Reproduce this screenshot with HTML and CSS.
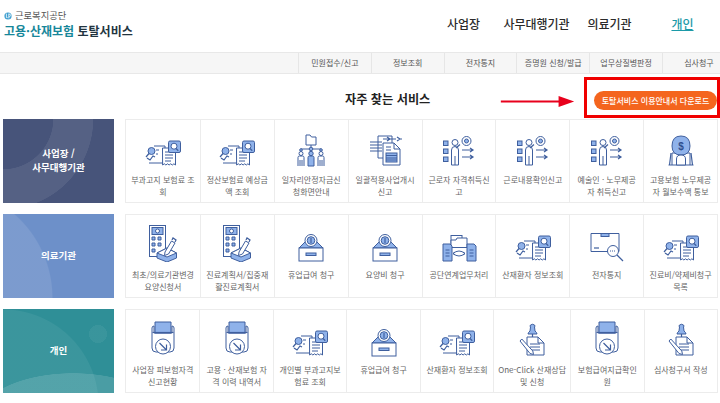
FILE: index.html
```html
<!DOCTYPE html>
<html lang="ko">
<head>
<meta charset="utf-8">
<title>고용·산재보험 토탈서비스</title>
<link rel="stylesheet" href="styles.css">
</head>
<body>
<svg class="sprite" aria-hidden="true">
  <defs>
    <symbol id="i-search" viewBox="0 0 44 38">
      <path class="line" fill="#fff" d="M13 17h11v17H8"/>
      <path class="line" fill="none" d="M15 21h3M15 25h2"/>
      <circle class="fill" cx="10.500" cy="22" r="3.500"/>
      <path class="thick" d="M8 24.500l-3 3.500M6 29l3 2 3-4 2 1"/>
      <path class="line" fill="#fff" d="M21.500 19h13v17l-1.600-1.200-1.600 1.200-1.600-1.200-1.600 1.200-1.600-1.200-1.600 1.200-1.600-1.200-1.700 1.200z"/>
      <path class="line" fill="none" d="M24 23h8M24 26h8M24 29h8M24 32h6"/>
      <rect class="fill" x="27.500" y="12" width="12" height="11.500" rx="1.500"/>
      <circle class="line" fill="#fff" cx="33" cy="17.200" r="3"/>
      <path class="thick" d="M35 19.500l2.300 2.200"/>
    </symbol>
    <symbol id="i-org" viewBox="0 0 44 38">
      <path class="fill-w" d="M17 6h4l1.500 2H27v8H17z"/>
      <path class="line" fill="none" d="M22 16v5M12 20h20M12 20v3M32 20v3M22 20v4"/>
      <circle class="fill" cx="12" cy="21" r="1.300"/>
      <circle class="fill" cx="32" cy="21" r="1.300"/>
      <circle class="fill" cx="22" cy="20" r="1.800"/>
      <circle class="fill-w" cx="12" cy="24.500" r="2"/>
      <circle class="fill-w" cx="32" cy="24.500" r="2"/>
      <path class="fill-w" d="M9 37v-8.500q0-1.500 1.500-1.500h3q1.500 0 1.500 1.500V37M29 37v-8.500q0-1.500 1.500-1.500h3q1.500 0 1.500 1.500V37"/>
      <path class="line" fill="none" d="M11 31v6M13 31v6M31 31v6M33 31v6"/>
      <circle class="fill" cx="22" cy="24.500" r="2.200"/>
      <path class="fill" d="M19 37v-8.500q0-1.500 1.500-1.500h3q1.500 0 1.500 1.500V37z"/>
    </symbol>
    <symbol id="i-docs" viewBox="0 0 44 38">
      <path class="line" fill="#fff" d="M15 7h14v22H15z"/>
      <path class="thick" d="M7 13h12M7 16h12M7 19h12M7 22h12"/>
      <path class="thick" d="M20 10h13M36 10h3M34 8l3 2-3 2M24 8l3 2-3 2"/>
      <path class="line" fill="#fff" d="M20 14h11l6 6v16H20z"/>
      <path class="line" fill="none" d="M31 14v6h6"/>
      <path class="thick" d="M23 18h5M23 21h5"/>
      <rect class="fill" x="23" y="24" width="11" height="9"/>
      <path class="line" fill="none" d="M23 26.500h11M23 29h11M23 31h11"/>
    </symbol>
    <symbol id="i-person" viewBox="0 0 44 38">
      <rect class="fill" x="6.500" y="12" width="4.500" height="4.500"/>
      <rect class="fill" x="6.500" y="20" width="4.500" height="4.500"/>
      <rect class="fill" x="6.500" y="28" width="4.500" height="4.500"/>
      <circle class="fill-w" cx="18" cy="13.500" r="3"/>
      <path class="fill-w" d="M14.500 36V21q0-3.500 3.500-3.500t3.500 3.500v15zM18 27v9"/>
      <path class="thick" d="M19 19l4-3.500"/>
      <circle class="fill-w" cx="29.500" cy="12" r="4.500"/>
      <circle class="fill" cx="29.500" cy="12" r="2"/>
      <path class="thick" d="M25 21h10M33 19l3 2-3 2M25 28h10M33 26l3 2-3 2"/>
    </symbol>
    <symbol id="i-money" viewBox="0 0 44 38">
      <path class="line" fill="#fff" d="M13 36V24h18v12"/>
      <path class="thick" d="M9.500 36h25M12 24l-1.500 12M32 24l1.500 12"/>
      <path class="fill" d="M22 7q9 0 9 10 0 9-9 9t-9-9q0-10 9-10z"/>
      <path class="line" fill="#fff" d="M17.500 36v-6q0-4 4.500-4t4.500 4v6z"/>
      <text class="dollar" x="22" y="20.500" text-anchor="middle">$</text>
    </symbol>
    <symbol id="i-build" viewBox="0 0 44 38">
      <rect class="fill-w" x="8.500" y="1.500" width="16" height="31"/>
      <rect class="fill" x="11" y="3.500" width="11" height="7"/>
      <circle class="line" fill="#fff" cx="16.500" cy="7" r="2"/>
      <path class="fill" d="M11 13h3v3h-3zM17 13h3v3h-3zM11 19h3v3h-3zM17 19h3v3h-3zM11 25h3v3h-3z"/>
      <path class="fill" d="M16 29l10-5 9.500 5v5l-9.500 4-10-4z"/>
      <path class="line" fill="#fff" d="M16 29l10-5 9.500 5-9.500 4z"/>
      <path class="fill-w" d="M24 28l6.500-11 3.500 2-6.500 11-4 1.500z"/>
      <path class="thick" d="M31 16l1-2 3 2-1 2"/>
    </symbol>
    <symbol id="i-box" viewBox="0 0 44 38">
      <path class="fill" d="M10 24l6-6h12l6 6z"/>
      <circle class="fill-w" cx="22" cy="16.500" r="6"/>
      <circle class="fill" cx="22" cy="16.500" r="3.800"/>
      <path class="thick" d="M22 14v5"/>
      <rect class="fill-w" x="10" y="24" width="24" height="13"/>
      <rect class="fill" x="17" y="29" width="10" height="2.500"/>
    </symbol>
    <symbol id="i-share" viewBox="0 0 44 38">
      <rect class="fill-w" x="14" y="11.500" width="11" height="12"/>
      <path class="fill-w" d="M14 16h5l1-2h10v9.500H14z"/>
      <path class="fill" d="M6 20h7l2 2v15H6z"/>
      <path class="fill" d="M30 20h7l2 2v15h-9z"/>
      <path class="line" fill="none" d="M8.500 26h4M8.500 29h4M8.500 32h4M32.500 26h4M32.500 29h4M32.500 32h4"/>
      <path class="line" fill="none" d="M18 31l-2-1.500 2-1.500M26 31l2-1.500-2-1.500M16 29.500q6-5 12 0M16 29.500q6 5 12 0"/>
    </symbol>
    <symbol id="i-parcel" viewBox="0 0 44 38">
      <path class="line" fill="#fff" stroke-width="1.300" d="M6 9.500h28v18H6z"/>
      <rect class="fill" x="16" y="9.500" width="8" height="3"/>
      <path class="thick" d="M9 24h5"/>
      <circle class="fill-w" cx="28" cy="27" r="5.500"/>
      <path class="line" stroke-dasharray="1 1" fill="none" d="M25 27h6"/>
      <path class="thick" stroke-width="2" d="M32 31l6 6"/>
    </symbol>
    <symbol id="i-scan" viewBox="0 0 44 38">
      <path class="line" fill="#fff" d="M11 9q0-2 2-2v7h18V7q2 0 2 2v20q0 4-4 4H15q-4 0-4-4z"/>
      <path class="fill" d="M14 3h16v11H14z"/>
      <path class="thick" d="M11.500 13.500h21"/>
      <circle class="fill-w" stroke-width="1.300" cx="22" cy="27.500" r="7.500"/>
      <path class="thick" d="M18.500 24l7 7M25.500 25.500V31H20"/>
    </symbol>
    <symbol id="i-pin" viewBox="0 0 44 38">
      <path class="fill" d="M18 15q0-1.500 2-3l.5-4q-1-1 0-2 2-1.500 4 0 1 1 0 2l.5 4q2 1.500 2 3z"/>
      <path class="thick" d="M22.500 15v4"/>
      <path class="line" fill="#fff" d="M17 18h11l6 6v12H17z"/>
      <path class="line" fill="none" d="M28 18v6h6"/>
      <path class="thick" d="M20 25h10M20 28h10M20 31h10"/>
      <path class="fill-w" d="M10 22l1.800-2 11 12 .7 3.500-3.500-1z"/>
    </symbol>
  </defs>
</svg>

<header class="top">
  <div class="logo">
    <div class="logo-org">
      <svg class="logo-mark" viewBox="0 0 10 10" aria-hidden="true"><circle cx="5" cy="5" r="4.500" fill="#3f9fd0"/><path d="M3 2v5h1.500M6 2v6M6 2.500q2.500 0 2 2t-2 1.500" fill="none" stroke="#fff" stroke-width="1"/></svg>
      <span>근로복지공단</span>
    </div>
    <div class="logo-name"><span class="teal">고용·산재보험</span> 토탈서비스</div>
  </div>
  <nav class="gnb">
    <a class="gnb-item">사업장</a>
    <a class="gnb-item">사무대행기관</a>
    <a class="gnb-item">의료기관</a>
    <a class="gnb-item active">개인</a>
  </nav>
</header>

<nav class="sub">
  <a class="sub-item">민원접수/신고</a>
  <a class="sub-item">정보조회</a>
  <a class="sub-item">전자통지</a>
  <a class="sub-item">증명원 신청/발급</a>
  <a class="sub-item">업무상질병판정</a>
  <a class="sub-item">심사청구</a>
</nav>

<div class="title-row">
  <h1 class="title">자주 찾는 서비스</h1>
  <a class="download">토탈서비스 이용안내서 다운로드</a>
  <svg class="mark-arrow" viewBox="0 0 80 12" aria-hidden="true"><path d="M0 5h63V0l17 6-17 6V7H0z" fill="#e8001c"/></svg>
  <div class="mark-box"></div>
</div>

<main class="rows">
  <section class="row">
    <div class="panel panel-biz">사업장 /<br>사무대행기관</div>
    <div class="cards">
      <a class="card"><svg class="ico"><use href="#i-search"/></svg><span>부과고지 보험료 조회</span></a>
      <a class="card"><svg class="ico"><use href="#i-search"/></svg><span>정산보험료 예상금액 조회</span></a>
      <a class="card"><svg class="ico"><use href="#i-org"/></svg><span>일자리안정자금신청화면안내</span></a>
      <a class="card"><svg class="ico"><use href="#i-docs"/></svg><span>일괄적용사업개시신고</span></a>
      <a class="card"><svg class="ico"><use href="#i-person"/></svg><span>근로자 자격취득신고</span></a>
      <a class="card"><svg class="ico"><use href="#i-person"/></svg><span>근로내용확인신고</span></a>
      <a class="card"><svg class="ico"><use href="#i-person"/></svg><span>예술인 · 노무제공자 취득신고</span></a>
      <a class="card"><svg class="ico"><use href="#i-money"/></svg><span>고용보험 노무제공자 월보수액 통보</span></a>
    </div>
  </section>
  <section class="row">
    <div class="panel panel-med">의료기관</div>
    <div class="cards">
      <a class="card"><svg class="ico"><use href="#i-build"/></svg><span>최초/의료기관변경<br>요양신청서</span></a>
      <a class="card"><svg class="ico"><use href="#i-build"/></svg><span>진료계획서/집중재활진료계획서</span></a>
      <a class="card"><svg class="ico"><use href="#i-box"/></svg><span>휴업급여 청구</span></a>
      <a class="card"><svg class="ico"><use href="#i-box"/></svg><span>요양비 청구</span></a>
      <a class="card"><svg class="ico"><use href="#i-share"/></svg><span>공단연계업무처리</span></a>
      <a class="card"><svg class="ico"><use href="#i-search"/></svg><span>산재환자 정보조회</span></a>
      <a class="card"><svg class="ico"><use href="#i-parcel"/></svg><span>전자통지</span></a>
      <a class="card"><svg class="ico"><use href="#i-search"/></svg><span>진료비/약제비청구목록</span></a>
    </div>
  </section>
  <section class="row">
    <div class="panel panel-ind">개인</div>
    <div class="cards">
      <a class="card"><svg class="ico"><use href="#i-scan"/></svg><span>사업장 피보험자격<br>신고현황</span></a>
      <a class="card"><svg class="ico"><use href="#i-scan"/></svg><span>고용 · 산재보험 자격 이력 내역서</span></a>
      <a class="card"><svg class="ico"><use href="#i-search"/></svg><span>개인별 부과고지보험료 조회</span></a>
      <a class="card"><svg class="ico"><use href="#i-box"/></svg><span>휴업급여 청구</span></a>
      <a class="card"><svg class="ico"><use href="#i-search"/></svg><span>산재환자 정보조회</span></a>
      <a class="card"><svg class="ico"><use href="#i-pin"/></svg><span class="nowrap">One-Click 산재상담<br>및 신청</span></a>
      <a class="card"><svg class="ico"><use href="#i-scan"/></svg><span>보험급여지급확인원</span></a>
      <a class="card"><svg class="ico"><use href="#i-pin"/></svg><span>심사청구서 작성</span></a>
    </div>
  </section>
</main>
</body>
</html>
```
FILE: styles.css
```css
* { box-sizing: border-box; }
html, body { margin: 0; padding: 0; height: 403px; overflow: hidden; background: #fff; }
body { font-family: "Noto Sans CJK KR", "Noto Sans", sans-serif; color: #333; }
.sprite { width: 0; height: 0; position: absolute; }

.line { stroke: #3f5f9e; stroke-width: 1; }
.thick { stroke: #3f5f9e; stroke-width: 1.200; fill: none; }
.fill { fill: #8fb2ea; stroke: #3f5f9e; stroke-width: 1; }
.fill-w { fill: #fff; stroke: #3f5f9e; stroke-width: 1; }
.dollar { font: 700 10px "Liberation Sans", sans-serif; fill: #2f4f8e; }

.top { height: 52px; display: flex; justify-content: space-between; }
.logo { padding: 9px 0 0 4px; }
.logo-org { display: flex; align-items: center; gap: 3px; font-size: 9.300px; line-height: 13px; color: #555; }
.logo-mark { width: 8px; height: 8px; }
.logo-name { font-size: 12px; line-height: 16px; margin-top: 1px; font-weight: 700; color: #22343f; }
.teal { color: #17879a; }
.gnb { display: grid; grid-template-columns: repeat(4, 73px); margin-right: 1px; padding-top: 15px; }
.gnb-item { font-size: 12px; line-height: 18px; font-weight: 500; text-align: center; color: #2b2b2b; }
.gnb-item.active { color: #1b9aa8; text-decoration: underline; }

.sub { height: 22px; display: flex; padding-left: 298px; background: #f6f6f6; border-top: 1px solid #e8e8e8; border-bottom: 1px solid #e8e8e8; overflow: hidden; }
.sub-item { flex: 0 0 72.800px; font-size: 8px; line-height: 20px; text-align: center; color: #555; border-left: 1px solid #e6e6e6; white-space: nowrap; }

.title-row { position: relative; height: 45px; display: flex; align-items: center; padding: 5px 3px 0 345px; }
.title { margin: 0; font-size: 12.200px; line-height: 18px; font-weight: 700; color: #222; white-space: nowrap; }
.download { margin: 3px 0 0 auto; width: 123px; height: 19px; border-radius: 10px; background: #f4651e; color: #fff; font-size: 8px; font-weight: 500; line-height: 19px; text-align: center; white-space: nowrap; }
.mark-arrow { position: absolute; left: 498px; top: 22px; width: 79px; height: 11px; }
.mark-box { position: absolute; left: 584px; top: 3px; width: 136px; height: 41px; border: 3px solid #f00000; }

.rows { display: flex; flex-direction: column; gap: 11px; padding-left: 3px; }
.row { display: flex; gap: 11px; height: 84px; }
.panel { flex: 0 0 111px; display: flex; align-items: center; justify-content: center; padding-bottom: 3px; text-align: center; font-size: 9.500px; line-height: 14px; font-weight: 700; color: #fff; }
.panel-biz {
  background:
    radial-gradient(circle at 0 0, transparent 50px, rgba(255,255,255,.08) 50.500px, rgba(255,255,255,.08) 90px, transparent 90.500px),
    #47547a;
}
.panel-med {
  background:
    radial-gradient(circle 112px at -62px 84px, rgba(255,255,255,.1) 99%, transparent 100%),
    #6d90c9;
}
.panel-ind {
  background:
    radial-gradient(circle 9px at 95px 25px, rgba(255,255,255,.05) 99%, transparent 100%),
    radial-gradient(ellipse 95px 46px at 70px 110px, rgba(255,255,255,.13) 99%, transparent 100%),
    radial-gradient(circle 96px at 0 96px, rgba(255,255,255,.06) 99%, transparent 100%),
    #2f8f97;
}

.cards { flex: 0 0 593px; display: grid; grid-template-columns: repeat(8, 1fr); border: 1px solid #ececec; background: #fff; }
.card { display: flex; flex-direction: column; align-items: center; padding: 9px 4px 0; border-left: 1px solid #ececec; text-align: center; font-size: 8px; line-height: 12.300px; color: #666; word-break: break-all; }
.card:first-child { border-left: 0; }
.nowrap { white-space: nowrap; }
.ico { width: 44px; height: 38px; flex: none; margin-bottom: 7px; }
```
